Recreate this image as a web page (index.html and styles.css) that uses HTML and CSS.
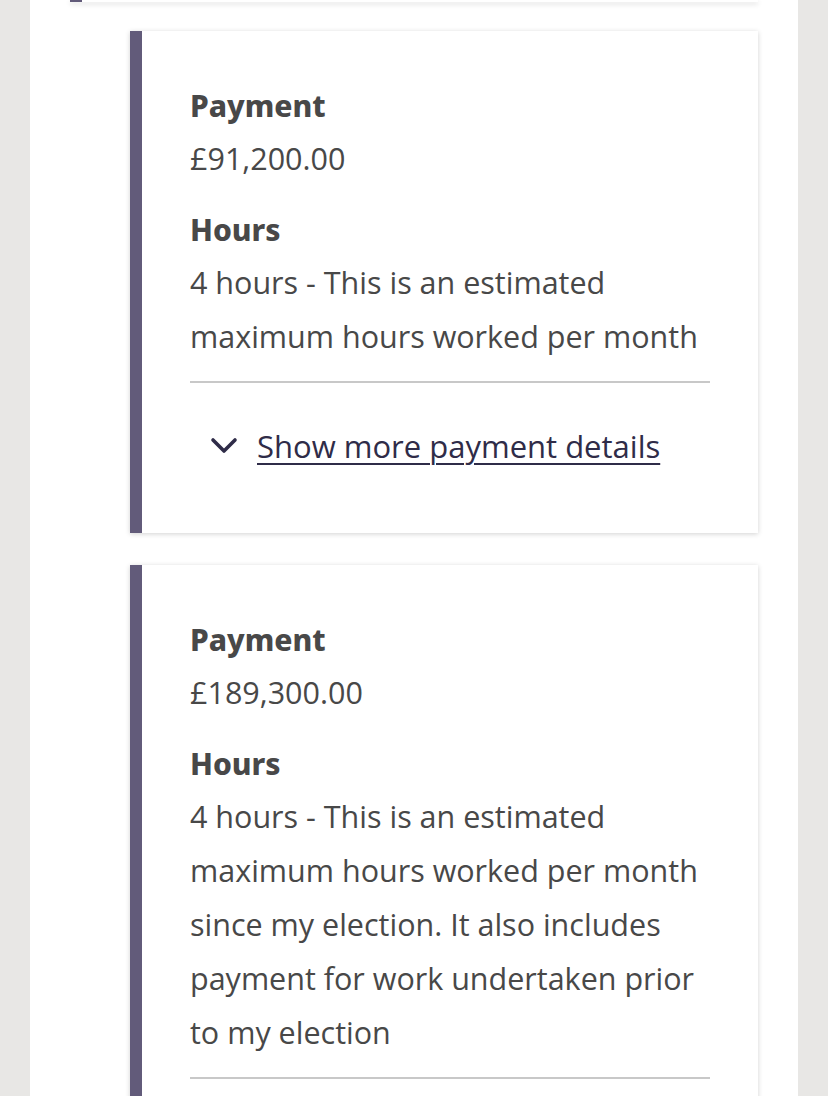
FILE: index.html
```html
<!DOCTYPE html>
<html lang="en">
<head>
<meta charset="utf-8">
<title>Payments</title>
<link rel="stylesheet" href="styles.css">
</head>
<body>
<main class="panel">
  <div class="prev-card"></div>
  <ul class="payments">
    <li class="card">
      <h3 class="label">Payment</h3>
      <p class="value">£91,200.00</p>
      <h3 class="label">Hours</h3>
      <p class="value">4 hours - This is an estimated maximum hours worked per month</p>
      <hr class="rule">
      <a class="more" href="#">
        <svg class="chev" viewBox="0 0 28 18" width="28" height="18" aria-hidden="true"><path d="M3 3 L14 14 L25 3" fill="none" stroke="currentColor" stroke-width="3.6" stroke-linecap="round" stroke-linejoin="round"/></svg>
        <span class="more-text">Show more payment details</span>
      </a>
    </li>
    <li class="card">
      <h3 class="label">Payment</h3>
      <p class="value">£189,300.00</p>
      <h3 class="label">Hours</h3>
      <p class="value">4 hours - This is an estimated maximum hours worked per month since my election. It also includes payment for work undertaken prior to my election</p>
      <hr class="rule">
      <a class="more" href="#">
        <svg class="chev" viewBox="0 0 28 18" width="28" height="18" aria-hidden="true"><path d="M3 3 L14 14 L25 3" fill="none" stroke="currentColor" stroke-width="3.6" stroke-linecap="round" stroke-linejoin="round"/></svg>
        <span class="more-text">Show more payment details</span>
      </a>
    </li>
  </ul>
</main>
</body>
</html>
```

FILE: styles.css
```css
html, body {
  margin: 0;
  padding: 0;
}
body {
  background: #e8e7e5;
  font-family: "Open Sans", "Liberation Sans", sans-serif;
  color: #484848;
}
.panel {
  background: #ffffff;
  margin: 0 30px;
  min-height: 1096px;
  padding: 0 40px;
  box-sizing: border-box;
  overflow: hidden;
}
.prev-card {
  height: 2px;
  border-left: 12px solid #625b7a;
  background: #ffffff;
  box-shadow: 0 2px 5px rgba(0, 0, 0, 0.18);
}
.payments {
  list-style: none;
  margin: 29px 0 0 60px;
  padding: 0;
  display: flex;
  flex-direction: column;
  gap: 32px;
}
.card {
  background: #ffffff;
  border-left: 12px solid #625b7a;
  box-shadow: 0 1px 5px rgba(0, 0, 0, 0.18);
  padding: 50px 48px 60px 48px;
}
.label {
  margin: 0;
  font-family: "Noto Sans", "Open Sans", sans-serif;
  font-weight: 800;
  font-size: 30px;
  line-height: 50px;
  color: #484848;
}
.value {
  margin: 0 0 20px 0;
  font-size: 30.5px;
  line-height: 54px;
}
.value:last-of-type {
  margin-bottom: 18px;
}
.rule {
  border: 0;
  height: 2px;
  background: #c8c8c8;
  margin: 0;
}
.more {
  display: flex;
  align-items: center;
  gap: 19px;
  padding: 36px 0 0 20px;
  color: #2f2c48;
  text-decoration: none;
  font-size: 31px;
  line-height: 54px;
}
.chev {
  flex: none;
}
.more-text {
  text-decoration: underline;
  text-decoration-thickness: 2px;
  text-underline-offset: 5px;
}
```
